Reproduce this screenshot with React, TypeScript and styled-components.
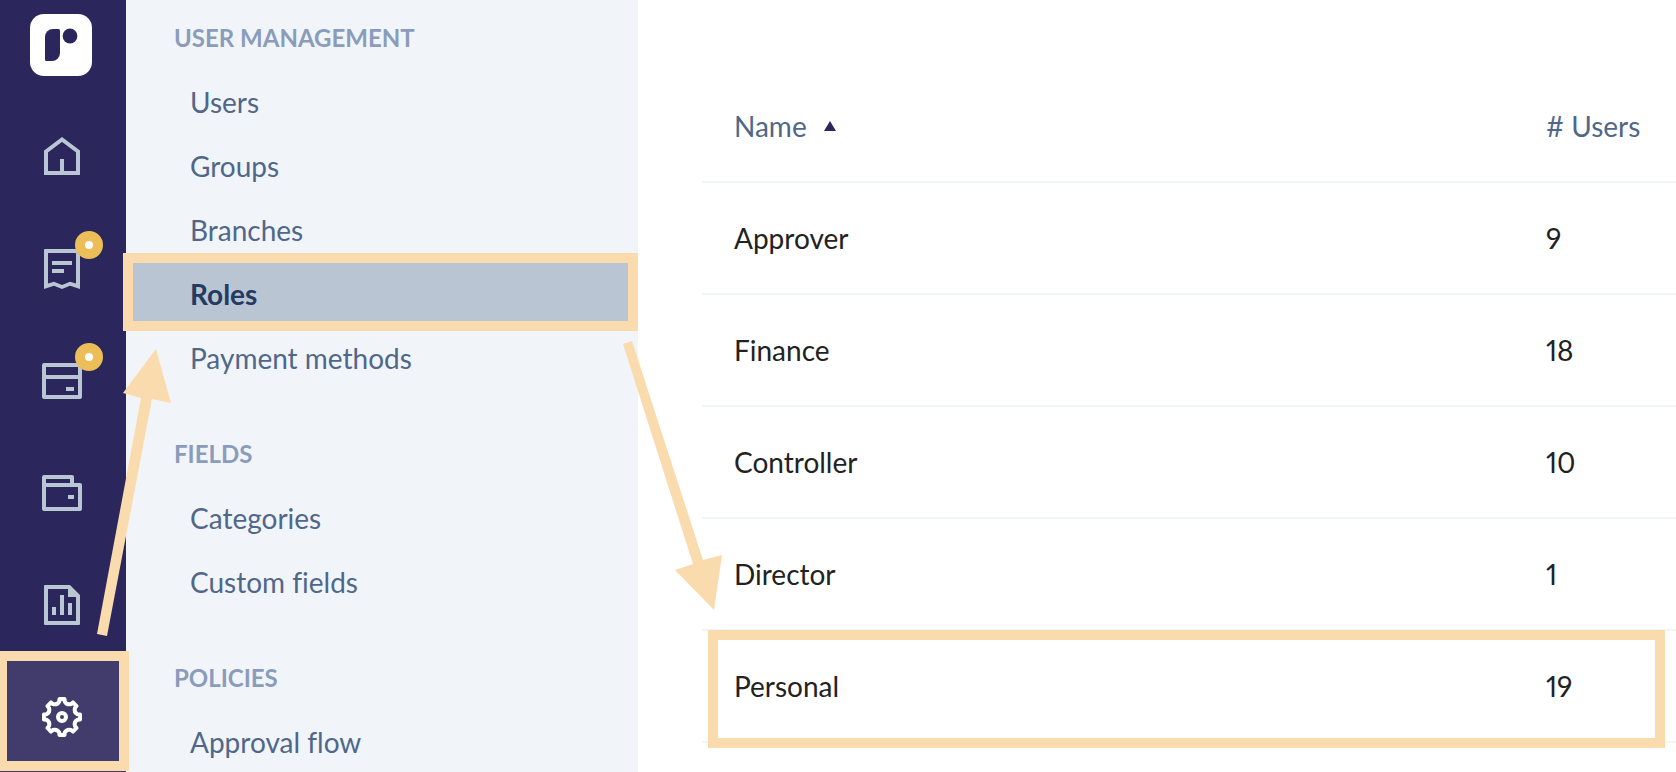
import React from "react";
import styled, { createGlobalStyle, css } from "styled-components";

const colors = {
  rail: "#2b265b",
  railActive: "#423c6c",
  railIcon: "#b9c6d3",
  panel: "#f1f5fa",
  selected: "#b9c5d3",
  heading: "#8a9cba",
  link: "#506789",
  linkActive: "#233b61",
  text: "#222222",
  line: "#f1f5f9",
  marker: "#fadbad",
  badge: "#ecbe57",
};

const GlobalStyle = createGlobalStyle`
  * { box-sizing: border-box; }
  body {
    margin: 0;
    background: #fff;
    font-family: Lato, "Open Sans", sans-serif;
    font-size: 28px;
    line-height: 32px;
    font-variant-ligatures: none;
    font-variant-numeric: proportional-nums;
  }
`;

const marker = css`
  content: "";
  position: absolute;
  border: 10px solid ${colors.marker};
  pointer-events: none;
`;

const Page = styled.div`
  position: relative;
  display: flex;
  height: 100vh;
  overflow: hidden;
`;

const Rail = styled.nav`
  position: relative;
  z-index: 1;
  flex: none;
  display: flex;
  flex-direction: column;
  width: 126px;
  background: ${colors.rail};
`;

const LogoLink = styled.a`
  flex: none;
  display: flex;
  justify-content: center;
  height: 101px;
  padding: 14px 4px 0 0;
`;

const RailLink = styled.a<{ $active?: boolean }>`
  position: relative;
  flex: none;
  display: flex;
  align-items: center;
  justify-content: center;
  height: 112px;
  padding-right: 2px;
  color: ${(p) => (p.$active ? "#fff" : colors.railIcon)};
  background: ${(p) => (p.$active ? colors.railActive : "transparent")};

  ${(p) =>
    p.$active &&
    css`
      &::after {
        ${marker}
        inset: -10px -3px 2px -3px;
      }
    `}
`;

const IconBox = styled.span`
  position: relative;
  width: 48px;
  height: 48px;

  svg {
    display: block;
  }
`;

const Badge = styled.span`
  position: absolute;
  top: -14px;
  right: -17px;
  width: 28px;
  height: 28px;
  border: 10px solid ${colors.badge};
  border-radius: 50%;
  background: #fff;
`;

const Sidebar = styled.nav`
  flex: none;
  display: flex;
  flex-direction: column;
  gap: 32px;
  width: 512px;
  padding-top: 6px;
  background: ${colors.panel};
`;

const Group = styled.section`
  flex: none;
`;

const GroupTitle = styled.h2`
  margin: 0;
  padding: 16px 48px;
  font-size: 24px;
  font-weight: 700;
  line-height: 32px;
  text-transform: uppercase;
  color: ${colors.heading};
`;

const GroupList = styled.ul`
  margin: 0;
  padding: 0;
  list-style: none;
`;

const SidebarLink = styled.a<{ $active?: boolean }>`
  position: relative;
  display: block;
  padding: 16px 64px;
  color: ${(p) => (p.$active ? colors.linkActive : colors.link)};
  font-weight: ${(p) => (p.$active ? 700 : 400)};
  background: ${(p) => (p.$active ? colors.selected : "transparent")};
  text-decoration: none;

  ${(p) =>
    p.$active &&
    css`
      z-index: 2;
      &::after {
        ${marker}
        inset: -9px 0 -5px -3px;
      }
    `}
`;

const Main = styled.main`
  flex: 1;
  min-width: 0;
  padding: 71px 0 0 64px;
`;

const Table = styled.table`
  width: 100%;
  table-layout: fixed;
  border-collapse: separate;
  border-spacing: 0;
  text-align: left;
`;

const HeadCell = styled.th<{ $narrow?: boolean }>`
  width: ${(p) => (p.$narrow ? "162px" : "auto")};
  height: 112px;
  padding: 0 0 0 32px;
  border-bottom: 2px solid ${colors.line};
  color: ${colors.link};
  font-weight: 400;
  white-space: nowrap;
`;

const SortButton = styled.button`
  display: flex;
  align-items: center;
  gap: 17px;
  padding: 0;
  border: 0;
  background: none;
  color: inherit;
  font: inherit;
  cursor: pointer;
`;

const Row = styled.tr<{ $marked?: boolean }>`
  position: relative;

  ${(p) =>
    p.$marked &&
    css`
      td:first-child::after {
        ${marker}
        inset: -1px 11px -5px 6px;
      }
    `}
`;

const Cell = styled.td`
  height: 112px;
  padding: 0 0 0 32px;
  border-bottom: 2px solid ${colors.line};
  color: ${colors.text};
`;

const Arrows = styled.svg`
  position: absolute;
  top: 0;
  left: 0;
  z-index: 3;
  pointer-events: none;
`;

const Logo = () => (
  <svg width="62" height="62" viewBox="0 0 62 62" aria-hidden="true">
    <rect width="62" height="62" rx="14" fill="#fff" />
    <path
      d="M23 15h5.500a1.500 1.500 0 0 1 1.500 1.500V39a8 8 0 0 1-8 8h-5.500a1.500 1.500 0 0 1-1.500-1.500V23a8 8 0 0 1 8-8Z"
      fill={colors.rail}
    />
    <circle cx="40" cy="22" r="7.400" fill={colors.rail} />
  </svg>
);

const Icon = ({ children }: { children: React.ReactNode }) => (
  <svg
    width="48"
    height="48"
    viewBox="0 0 48 48"
    fill="none"
    stroke="currentColor"
    strokeWidth="4"
    aria-hidden="true"
  >
    {children}
  </svg>
);

const HomeIcon = () => (
  <Icon>
    <path d="M8 18.500 24 6.500l16 12V40H8Z" strokeLinejoin="miter" />
    <path d="M24 26v14" />
  </Icon>
);

const ReceiptIcon = () => (
  <Icon>
    <path
      d="M6 5a1 1 0 0 1 1-1h34a1 1 0 0 1 1 1v39l-10-3.200L24 44l-8-3.200L6 44ZM10 8v30.500l6-1.700 8 3.200 8-3.200 6 1.700V8Z"
      fill="currentColor"
      fillRule="evenodd"
      stroke="none"
    />
    <path d="M14 18h20M14 26h12" />
  </Icon>
);

const CardIcon = () => (
  <Icon>
    <rect x="6" y="8" width="36" height="32" strokeLinejoin="round" />
    <path d="M6 20h36M28 32h8" />
  </Icon>
);

const WalletIcon = () => (
  <Icon>
    <rect x="6" y="16" width="36" height="24" strokeLinejoin="round" />
    <path d="M6 16V8h28v8M30 28h6" strokeLinejoin="round" />
  </Icon>
);

const ReportIcon = () => (
  <Icon>
    <path
      d="M7 4h25l10 10v29a1 1 0 0 1-1 1H7a1 1 0 0 1-1-1V5a1 1 0 0 1 1-1ZM10 8v32h28V16h-8V8Z"
      fill="currentColor"
      fillRule="evenodd"
      stroke="none"
    />
    <path d="M16 26v8M24 14v20M32 22v12" />
  </Icon>
);

const toothAngles = [0, 45, 90, 135, 180, 225, 270, 315];

const gearPath = (() => {
  const at = (radius: number, degrees: number) => {
    const a = ((degrees - 90) * Math.PI) / 180;
    return `${(24 + radius * Math.cos(a)).toFixed(2)} ${(24 + radius * Math.sin(a)).toFixed(2)}`;
  };
  return (
    toothAngles
      .map(
        (t, i) =>
          `${i ? "L" : "M"}${at(18.2, t - 8)}L${at(18.2, t + 8)}L${at(15.8, t + 10)}A5.500 5.500 0 0 0 ${at(15.8, t + 35)}`
      )
      .join("") + "Z"
  );
})();

const GearIcon = () => (
  <Icon>
    <path d={gearPath} strokeLinejoin="round" />
    <circle cx="24" cy="24" r="4" />
  </Icon>
);

const railItems = [
  { label: "Home", icon: <HomeIcon /> },
  { label: "Expenses", icon: <ReceiptIcon />, badge: true },
  { label: "Cards", icon: <CardIcon />, badge: true },
  { label: "Wallet", icon: <WalletIcon /> },
  { label: "Reports", icon: <ReportIcon /> },
  { label: "Settings", icon: <GearIcon />, active: true },
];

const groups = [
  {
    title: "User management",
    items: ["Users", "Groups", "Branches", "Roles", "Payment methods"],
  },
  { title: "Fields", items: ["Categories", "Custom fields"] },
  { title: "Policies", items: ["Approval flow"] },
];

const roles = [
  { name: "Approver", users: 9 },
  { name: "Finance", users: 18 },
  { name: "Controller", users: 10 },
  { name: "Director", users: 1 },
  { name: "Personal", users: 19 },
];

export default function App() {
  return (
    <Page>
      <GlobalStyle />
      <Rail aria-label="Main">
        <LogoLink href="#" aria-label="Dashboard">
          <Logo />
        </LogoLink>
        {railItems.map((item) => (
          <RailLink key={item.label} href="#" aria-label={item.label} $active={item.active}>
            <IconBox>
              {item.icon}
              {item.badge && <Badge />}
            </IconBox>
          </RailLink>
        ))}
      </Rail>
      <Sidebar aria-label="Settings">
        {groups.map((group) => (
          <Group key={group.title}>
            <GroupTitle>{group.title}</GroupTitle>
            <GroupList>
              {group.items.map((item) => (
                <li key={item}>
                  <SidebarLink href="#" $active={item === "Roles"}>
                    {item}
                  </SidebarLink>
                </li>
              ))}
            </GroupList>
          </Group>
        ))}
      </Sidebar>
      <Main>
        <Table>
          <thead>
            <tr>
              <HeadCell scope="col" aria-sort="ascending">
                <SortButton type="button">
                  Name
                  <svg width="12" height="10" viewBox="0 0 12 10" aria-hidden="true">
                    <path d="M6 0l6 10H0Z" fill={colors.rail} />
                  </svg>
                </SortButton>
              </HeadCell>
              <HeadCell scope="col" $narrow>
                # Users
              </HeadCell>
            </tr>
          </thead>
          <tbody>
            {roles.map((role) => (
              <Row key={role.name} $marked={role.name === "Personal"}>
                <Cell>{role.name}</Cell>
                <Cell>{role.users}</Cell>
              </Row>
            ))}
          </tbody>
        </Table>
      </Main>
      <Arrows width="760" height="640" viewBox="0 0 760 640" fill={colors.marker} aria-hidden="true">
        <path d="M156 349l15 54-19-4-45 237-10-2 44-236-18-5Z" />
        <path d="M623 344l9-3 71 219 19-5-8 55-39-40 18-6Z" />
      </Arrows>
    </Page>
  );
}
